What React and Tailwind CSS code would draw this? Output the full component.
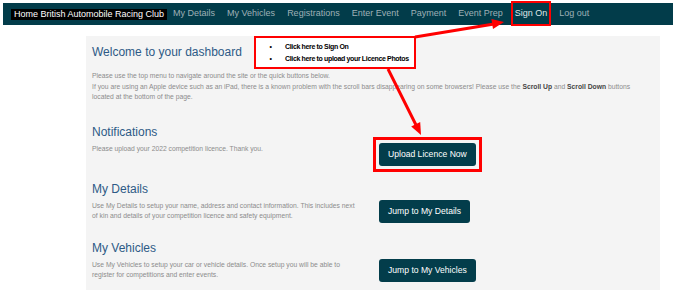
import React from "react";

const navItems = ["My Details", "My Vehicles", "Registrations", "Enter Event", "Payment", "Event Prep"];

function Btn({ children, highlight }) {
  return (
    <div className="relative">
      {highlight && <span className="absolute -inset-[6px] border-[3px] border-[#ff0000]" />}
      <div className="h-[23px] px-[9px] rounded-[3px] bg-[#033d4b] text-white text-[8.6px] leading-[23px] whitespace-nowrap">
        {children}
      </div>
    </div>
  );
}

function Section({ title, lines, button, highlight, className }) {
  return (
    <div className={className}>
      <div className="text-[12px] leading-[16px] text-[#2d5a86]">{title}</div>
      <div className="flex items-start mt-[3px]">
        <div className="w-[287px] text-[6.75px] leading-[10px] text-[#8c8c8c] mt-[1px]">
          {lines.map((l, i) => (
            <div key={i} className="whitespace-nowrap">{l}</div>
          ))}
        </div>
        <Btn highlight={highlight}>{button}</Btn>
      </div>
    </div>
  );
}

export default function App() {
  return (
    <div className="relative w-[676px] h-[290px] bg-white overflow-hidden font-['Liberation_Sans',Arial,sans-serif]">
      {/* top nav */}
      <div className="mx-[3px] mt-[3px] h-[22px] bg-[#023c4a] flex items-center text-[9px]">
        <div className="ml-[8px] h-[11px] leading-[11px] bg-black text-white px-[3px] whitespace-nowrap">
          Home British Automobile Racing Club
        </div>
        <div className="flex items-center gap-[12px] ml-[6px] text-[#9fb0b6]">
          {navItems.map((n) => (
            <span key={n} className="whitespace-nowrap">{n}</span>
          ))}
          <span className="relative whitespace-nowrap text-[#dfe6e8]">
            <span className="absolute -inset-x-[4px] -top-[6px] -bottom-[5px] border-[2.5px] border-[#ff0000]" />
            Sign On
          </span>
          <span className="whitespace-nowrap">Log out</span>
        </div>
      </div>

      {/* content panel */}
      <div className="ml-[86px] w-[574px] mt-[11px] h-[260px] bg-[#f4f4f4] pl-[6px] pt-[8px]">
        <div className="text-[12px] leading-[16px] text-[#2d5a86]">Welcome to your dashboard</div>
        <div className="mt-[11px] text-[6.75px] leading-[10.5px] text-[#8c8c8c] whitespace-nowrap">
          <div>Please use the top menu to navigate around the site or the quick buttons below.</div>
          <div>
            If you are using an Apple device such as an iPad, there is a known problem with the scroll bars disappearing on some browsers! Please use the{" "}
            <b className="text-[#444]">Scroll Up</b> and <b className="text-[#444]">Scroll Down</b> buttons
          </div>
          <div>located at the bottom of the page.</div>
        </div>

        <Section
          className="mt-[21px]"
          title="Notifications"
          lines={["Please upload your 2022 competition licence. Thank you."]}
          button="Upload Licence Now"
          highlight
        />
        <Section
          className="mt-[15px]"
          title="My Details"
          lines={[
            "Use My Details to setup your name, address and contact information. This includes next",
            "of kin and details of your competition licence and safety equipment.",
          ]}
          button="Jump to My Details"
        />
        <Section
          className="mt-[17px]"
          title="My Vehicles"
          lines={[
            "Use My Vehicles to setup your car or vehicle details. Once setup you will be able to",
            "register for competitions and enter events.",
          ]}
          button="Jump to My Vehicles"
        />
      </div>

      {/* annotation callout */}
      <div className="absolute left-[254px] top-[36px] w-[162px] h-[33px] bg-white border-[2px] border-[#ff0000] text-[7px] tracking-[-0.35px] font-bold text-black leading-[12px] pt-[3px]">
        <div className="flex items-center">
          <span className="w-[29px] text-center text-[7px]">•</span>
          <span>Click here to Sign On</span>
        </div>
        <div className="flex items-center">
          <span className="w-[29px] text-center text-[7px]">•</span>
          <span>Click here to upload your Licence Photos</span>
        </div>
      </div>

      {/* arrows */}
      <svg className="absolute inset-0 pointer-events-none" width="676" height="290" viewBox="0 0 676 290">
        <line x1="415" y1="37" x2="494" y2="24" stroke="#ff0000" strokeWidth="3" />
        <polygon points="504,22 493,28.9 491.4,19.1" fill="#ff0000" />
        <line x1="388" y1="69" x2="416" y2="125" stroke="#ff0000" strokeWidth="3" />
        <polygon points="421,135 420.2,122 411.2,126.4" fill="#ff0000" />
      </svg>
    </div>
  );
}
